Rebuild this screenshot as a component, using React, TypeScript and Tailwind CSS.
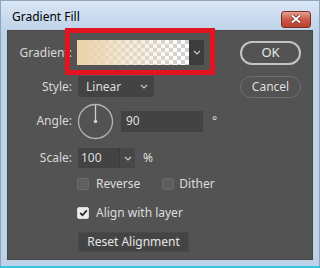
import React from "react";

const font = "font-['Noto_Sans','Open_Sans',sans-serif]";

function Chevron({ className = "" }: { className?: string }) {
  return (
    <svg width="8" height="5" viewBox="0 0 8 5" className={className}>
      <path d="M1 1 L4 4 L7 1" fill="none" stroke="#c8c8c8" strokeWidth="1.2" />
    </svg>
  );
}

function Label({ text }: { text: string }) {
  return (
    <span className="w-[65px] shrink-0 pr-[1px] text-right text-[12px] text-[#d8d8d8]">{text}</span>
  );
}

function Check({ checked = false }: { checked?: boolean }) {
  return (
    <span
      className={`flex h-[12px] w-[12px] shrink-0 items-center justify-center rounded-[2px] border ${
        checked ? "border-[#d8d8d8] bg-[#ececec]" : "border-[#6a6a6a] bg-[#5f5f5f]"
      }`}
    >
      {checked && (
        <svg width="9" height="8" viewBox="0 0 9 8">
          <path d="M1.2 4 L3.5 6.3 L7.8 1.4" fill="none" stroke="#2b2b2b" strokeWidth="1.8" />
        </svg>
      )}
    </span>
  );
}

export default function App() {
  return (
    <div className={`flex h-[268px] w-[320px] flex-col overflow-hidden ${font}`}>
      {/* title bar */}
      <div className="flex h-[30px] shrink-0 items-center justify-between border-x border-t border-[#8ea4bc] bg-linear-to-b from-[#d9e6f4] to-[#bed3ea] pl-[11px] pr-[8px]">
        <span className="pt-[2px] text-[12px] text-black">Gradient Fill</span>
        <button className="mt-[7px] flex h-[17px] w-[30px] items-center justify-center rounded-[3px] border border-[#7b3126] bg-linear-to-b from-[#e4a091] via-[#cd5a48] to-[#b8402f]">
          <svg width="12" height="10" viewBox="0 0 12 10">
            <path d="M2 1.5 L10 8.5 M10 1.5 L2 8.5" stroke="#6b2a20" strokeWidth="3.6" />
            <path d="M2 1.5 L10 8.5 M10 1.5 L2 8.5" stroke="#ffffff" strokeWidth="2" />
          </svg>
        </button>
      </div>

      <div className="flex h-[230px] shrink-0 bg-[#bed3ea]">
        <div className="w-[7px] shrink-0 border-l border-[#8ea4bc]" />
        {/* dialog panel */}
        <div className="relative flex w-[306px] shrink-0 border border-[#474747] bg-[#535353] text-[12px] text-[#dedede]">
          <div className="flex flex-1 flex-col">
            <div className="mt-[9px] flex h-[25px] items-center">
              <Label text="Gradient:" />
              <div className="ml-[4px] flex h-[25px]">
                <div className="w-[112px] bg-[conic-gradient(#d2d2d2_25%,#ffffff_0_50%,#d2d2d2_0_75%,#ffffff_0)] bg-size-[8px_8px]">
                  <div className="h-full w-full bg-linear-to-r from-[#ecd3ab] from-5% via-[#f0dcbc]/60 via-45% to-transparent to-95%" />
                </div>
                <div className="flex w-[15px] items-center justify-center bg-[#3c3c3c]">
                  <Chevron />
                </div>
              </div>
            </div>

            <div className="mt-[11px] flex h-[21px] items-center">
              <Label text="Style:" />
              <div className="ml-[5px] flex h-[21px] w-[76px] items-center justify-between rounded-[2px] bg-[#434343] pl-[8px] pr-[6px]">
                <span>Linear</span>
                <Chevron />
              </div>
            </div>

            <div className="mt-[6px] flex h-[36px] items-center">
              <Label text="Angle:" />
              <svg width="37" height="37" viewBox="0 0 37 37" className="ml-[4px] shrink-0">
                <circle cx="18.5" cy="18.5" r="17" fill="none" stroke="#b4b4b4" strokeWidth="1.3" />
                <path d="M18.5 2 L18.5 18.5" stroke="#d0d0d0" strokeWidth="1.3" />
                <circle cx="18.5" cy="18.5" r="1.8" fill="#d0d0d0" />
              </svg>
              <div className="ml-[7px] flex h-[21px] w-[82px] items-center bg-[#434343] pl-[5px]">90</div>
              <span className="ml-[9px]">°</span>
            </div>

            <div className="mt-[9px] flex h-[20px] items-center">
              <Label text="Scale:" />
              <div className="ml-[5px] flex h-[20px]">
                <div className="flex w-[41px] items-center bg-[#434343] pl-[3px]">100</div>
                <div className="flex w-[16px] items-center justify-center border-l border-[#3a3a3a] bg-[#474747]">
                  <Chevron />
                </div>
              </div>
              <span className="ml-[8px]">%</span>
            </div>

            <div className="mt-[10px] flex h-[12px] items-center pl-[69px]">
              <Check />
              <span className="ml-[7px]">Reverse</span>
              <span className="ml-[22px] flex items-center">
                <Check />
                <span className="ml-[5px]">Dither</span>
              </span>
            </div>

            <div className="mt-[17px] flex h-[12px] items-center pl-[69px]">
              <Check checked />
              <span className="ml-[7px]">Align with layer</span>
            </div>

            <div className="mt-[13px] pl-[70px]">
              <button className="flex h-[20px] w-[111px] items-center justify-center rounded-[2px] border border-[#4a4a4a] bg-[#444444] text-[#e4e4e4]">
                Reset Alignment
              </button>
            </div>
          </div>

          <div className="flex w-[72px] shrink-0 flex-col pr-[9px] pt-[10px]">
            <button className="flex h-[24px] w-[61px] items-center justify-center rounded-full border-2 border-[#c4c4c4] text-[13px] text-[#e8e8e8]">
              OK
            </button>
            <button className="mt-[11px] flex h-[22px] w-[61px] items-center justify-center rounded-full border border-[#6d6d6d] text-[#dedede]">
              Cancel
            </button>
          </div>

          {/* red highlight */}
          <div className="absolute left-[57px] top-[-3px] h-[47px] w-[150px] border-[5px] border-[#e3141f]" />
        </div>
        <div className="w-[7px] shrink-0 border-r border-[#8ea4bc]" />
      </div>

      <div className="h-[6px] shrink-0 border-x border-[#8ea4bc] bg-[#bed3ea]" />
      <div className="h-[2px] shrink-0 bg-[#35c4de]" />
    </div>
  );
}
